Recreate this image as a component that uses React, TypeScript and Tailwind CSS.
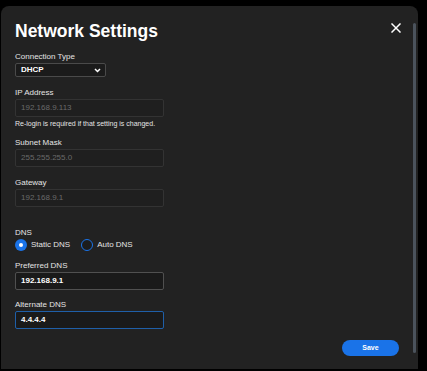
import React from 'react';

const Label = ({ children }: { children: React.ReactNode }) => (
  <div className="text-[8px] leading-[10px] text-[#e4e4e4]">{children}</div>
);

const Field = ({ label, value, disabled, focused }: { label: string; value: string; disabled?: boolean; focused?: boolean }) => (
  <div>
    <Label>{label}</Label>
    <div
      className={`mt-px flex h-[18px] w-[149px] items-center rounded-[2px] border pl-[5px] text-[8px] ${
        disabled
          ? 'border-[#333333] bg-[#1f1f1f] text-[#6a6a6a]'
          : focused
          ? 'border-[#1f5fa8] bg-[#1a1a1a] font-bold text-white'
          : 'border-[#505050] bg-[#1a1a1a] font-bold text-white'
      }`}
    >
      {value}
    </div>
  </div>
);

const Radio = ({ checked, label }: { checked?: boolean; label: string }) => (
  <div className="flex items-center gap-[4px]">
    {checked ? (
      <div className="flex h-[12px] w-[12px] items-center justify-center rounded-full bg-[#1a73e8]">
        <div className="h-[4px] w-[4px] rounded-full bg-white"></div>
      </div>
    ) : (
      <div className="h-[12px] w-[12px] rounded-full border-[1.5px] border-[#1a73e8] bg-[#1c1c1c]"></div>
    )}
    <span className="text-[8px] text-[#e4e4e4]">{label}</span>
  </div>
);

export default function App() {
  return (
    <div className="h-[371px] w-[427px] overflow-hidden bg-black pl-px pt-[6px]" style={{ fontFamily: '"Liberation Sans", Arial, sans-serif' }}>
      <div className="relative h-[363px] w-[417px] rounded-t-[8px] bg-[#222222] pl-[14px] pt-[15px]">
        {/* Close */}
        <button className="absolute left-[390px] top-[17px] flex h-[10px] w-[10px] items-center justify-center">
          <svg width="10" height="10" viewBox="0 0 10 10">
            <path d="M1 1 L9 9 M9 1 L1 9" stroke="white" strokeWidth="1.5" strokeLinecap="square" />
          </svg>
        </button>
        {/* Scrollbar */}
        <div className="absolute right-[2px] top-[17px] h-[330px] w-[3px] rounded-full bg-[#4b535c]"></div>

        <h1 className="text-[17.5px] font-bold leading-[20px] text-white">Network Settings</h1>

        <div className="mt-[11px]">
          <Label>Connection Type</Label>
          <div className="mt-px flex h-[14px] w-[91px] items-center justify-between rounded-[2px] border border-[#4a4a4a] bg-[#1b1b1b] pl-[5px] pr-[4px]">
            <span className="text-[8px] font-bold text-white">DHCP</span>
            <svg width="7" height="5" viewBox="0 0 7 5">
              <path d="M1 1 L3.5 3.5 L6 1" stroke="white" strokeWidth="1.5" fill="none" />
            </svg>
          </div>
        </div>

        <div className="mt-[11px]">
          <Field label="IP Address" value="192.168.9.113" disabled />
          <div className="mt-[2px] text-[7px] leading-[9px] text-[#e4e4e4]">Re-login is required if that setting is changed.</div>
        </div>

        <div className="mt-[10px]">
          <Field label="Subnet Mask" value="255.255.255.0" disabled />
        </div>

        <div className="mt-[11px]">
          <Field label="Gateway" value="192.168.9.1" disabled />
        </div>

        <div className="mt-[21px]">
          <Label>DNS</Label>
          <div className="mt-px flex h-[12px] items-center gap-[11px]">
            <Radio checked label="Static DNS" />
            <Radio label="Auto DNS" />
          </div>
        </div>

        <div className="mt-[10px]">
          <Field label="Preferred DNS" value="192.168.9.1" />
        </div>

        <div className="mt-[10px]">
          <Field label="Alternate DNS" value="4.4.4.4" focused />
        </div>

        <div className="mt-[11px] flex justify-end pr-[19px]">
          <button className="flex h-[16px] w-[57px] items-center justify-center rounded-full bg-[#1a73e8] text-[7px] font-bold text-white">
            Save
          </button>
        </div>
      </div>
    </div>
  );
}
